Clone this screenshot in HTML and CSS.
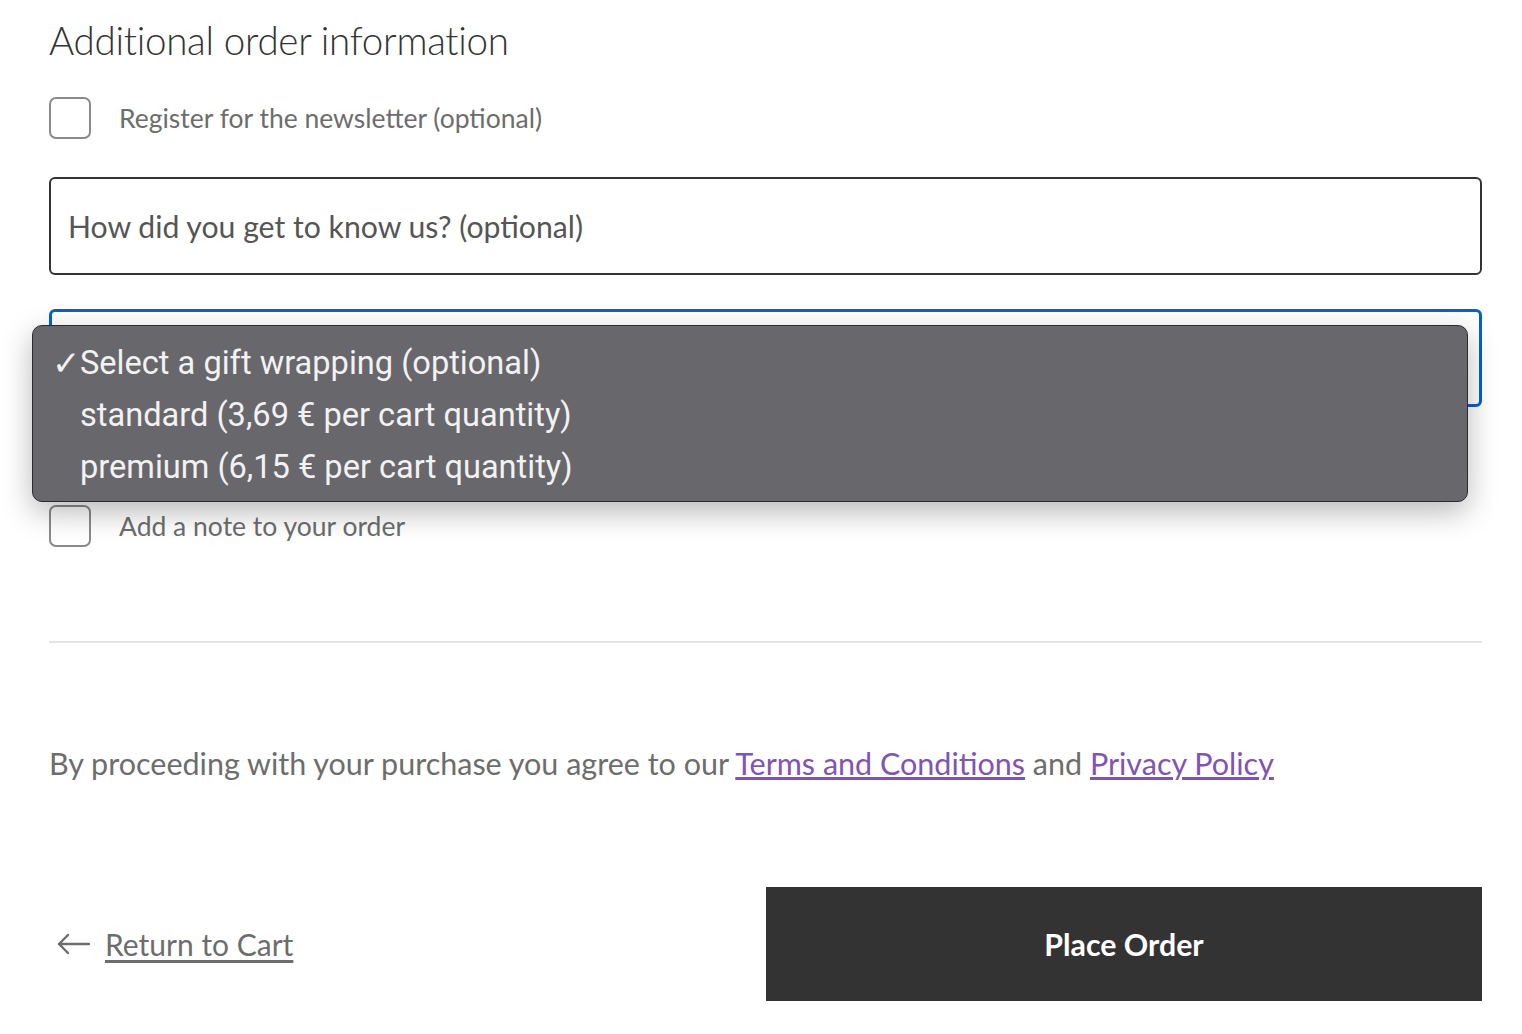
FILE: index.html
```html
<!DOCTYPE html>
<html lang="en">
<head>
<meta charset="utf-8">
<title>Checkout</title>
<link rel="stylesheet" href="styles.css">
</head>
<body>
<div class="page">
  <h2 class="title">Additional order information</h2>

  <label class="check-row newsletter">
    <span class="box"></span>
    <span class="check-label">Register for the newsletter (optional)</span>
  </label>

  <div class="field">
    <span class="placeholder">How did you get to know us? (optional)</span>
  </div>

  <div class="select-wrap">
    <div class="field select">
      <span class="float-label">Gift wrapping (optional)</span>
    </div>
    <ul class="menu">
      <li class="selected"><span class="tick">✓</span>Select a gift wrapping (optional)</li>
      <li><span class="tick"></span>standard (3,69 € per cart quantity)</li>
      <li><span class="tick"></span>premium (6,15 € per cart quantity)</li>
    </ul>
  </div>

  <label class="check-row note">
    <span class="box"></span>
    <span class="check-label">Add a note to your order</span>
  </label>

  <hr class="sep">

  <p class="terms">By proceeding with your purchase you agree to our <a href="#">Terms and Conditions</a> and <a href="#">Privacy Policy</a></p>

  <div class="actions">
    <a class="back" href="#">
      <svg class="arrow" width="34" height="22" viewBox="0 0 34 22"><path d="M33 11H3M12 2L3 11l9 9" fill="none" stroke="#6d6d6d" stroke-width="2.4" stroke-linecap="round" stroke-linejoin="round"/></svg>
      <span class="back-text">Return to Cart</span>
    </a>
    <button class="place">Place Order</button>
  </div>
</div>
</body>
</html>
```
FILE: styles.css
```css
* { box-sizing: border-box; }
html, body { margin: 0; padding: 0; background: #fff; }
body { font-family: "Lato", "Liberation Sans", sans-serif; color: #333; }
.page { width: 1433px; margin-left: 49px; display: flex; flex-direction: column; }

.title { margin: 0; padding-top: 17px; height: 97px; font-size: 38.6px; font-weight: 300; line-height: 46px; color: #333; letter-spacing: -0.3px; }

.check-row { display: flex; align-items: center; gap: 28px; height: 42px; }
.box { width: 42px; height: 42px; border: 2px solid #8a8a8a; border-radius: 7px; flex: none; background: #fff; }
.check-label { font-size: 26.5px; color: #6d6d6d; }

.field { margin-top: 38px; height: 98px; border: 2px solid #333; border-radius: 6px; display: flex; align-items: center; padding-left: 17px; }
.placeholder { font-size: 30.2px; color: #555; }

.select-wrap { position: relative; margin-top: 34px; }
.select-wrap .field { margin-top: 0; border: 3px solid #0063cc; align-items: flex-start; padding-top: 8px; }
.float-label { font-size: 20px; color: #555; }

.menu { position: absolute; left: -17px; top: 16px; width: 1436px; height: 177px; margin: 0; padding: 11px 0 0 0; list-style: none; background: #68676c; border: 1px solid #2c2c2e; border-radius: 10px; box-shadow: 0 10px 30px rgba(0,0,0,0.28); font-family: "Roboto", "Inter", sans-serif; }
.menu li { height: 52px; display: flex; align-items: center; font-size: 32.6px; color: #f2f2f2; }
.tick { width: 47px; padding-left: 19px; font-family: "DejaVu Sans", sans-serif; font-size: 34px; font-weight: 400; line-height: 1; }

.note { margin-top: 98px; }

.sep { margin: 94px 0 0 0; border: 0; border-top: 2px solid #e4e4e4; height: 0; }

.terms { margin: 100px 0 0 0; font-size: 30.5px; color: #6d6d6d; line-height: 40px; }
.terms a { color: #7f54b3; }

.actions { margin-top: 104px; display: flex; align-items: center; justify-content: space-between; }
.back { display: flex; align-items: center; gap: 15px; padding-left: 7px; color: #6d6d6d; text-decoration: none; }
.back-text { font-size: 30px; text-decoration: underline; text-underline-offset: 4px; }
.place { width: 716px; height: 114px; border: 0; background: #333; color: #fff; font-family: "Lato", "Liberation Sans", sans-serif; font-size: 30.3px; font-weight: 700; border-radius: 0; }
```
